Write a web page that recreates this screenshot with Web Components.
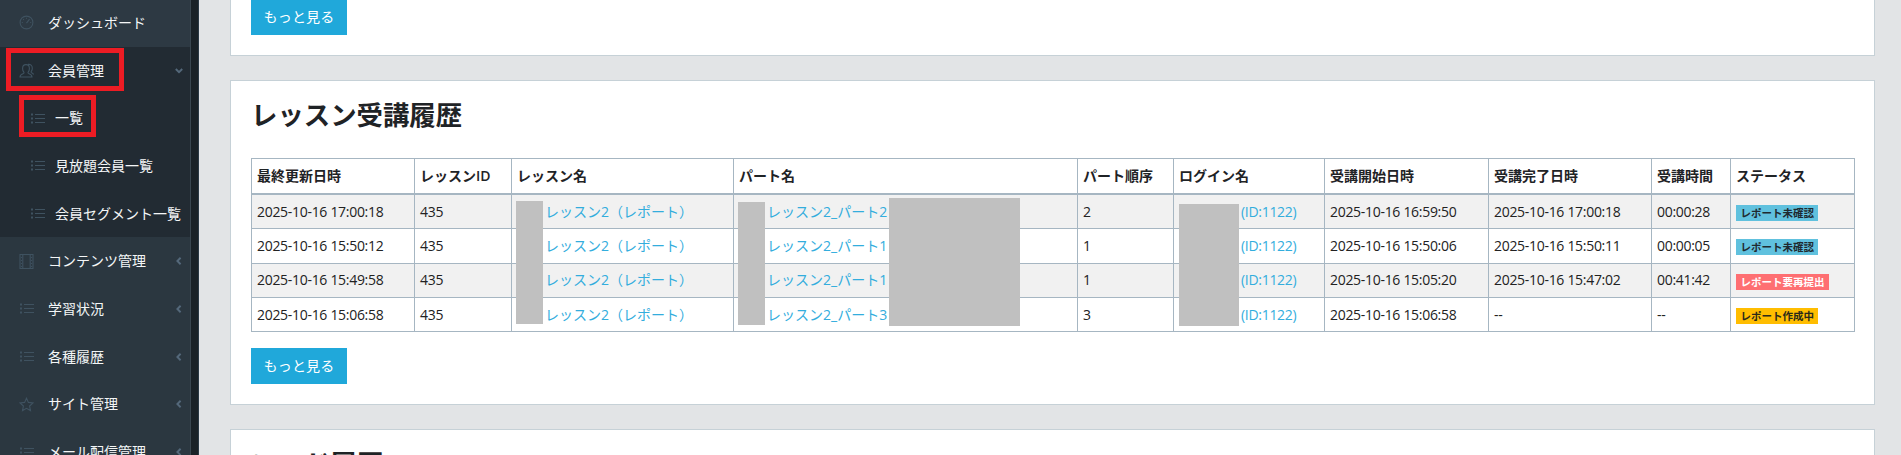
<!DOCTYPE html>
<html lang="ja"><head><meta charset="utf-8"><title>管理画面</title>
<style>
html,body{margin:0;height:455px;overflow:hidden;background:#e2e4e6}
body{font:14px/20px "Open Sans","Noto Sans CJK JP",sans-serif;color:#222}
</style></head><body>
<app-shell>
  <side-nav slot="side">
    <nav-item icon="gauge" tone="light">ダッシュボード</nav-item>
    <nav-group>
      <nav-item icon="user" caret="down" strong>会員管理</nav-item>
      <nav-item icon="list" sub>一覧</nav-item>
      <nav-item icon="list" sub>見放題会員一覧</nav-item>
      <nav-item icon="list" sub>会員セグメント一覧</nav-item>
    </nav-group>
    <nav-item icon="film" caret="left">コンテンツ管理</nav-item>
    <nav-item icon="list" caret="left">学習状況</nav-item>
    <nav-item icon="list" caret="left">各種履歴</nav-item>
    <nav-item icon="star" caret="left">サイト管理</nav-item>
    <nav-item icon="list" caret="left">メール配信管理</nav-item>
  </side-nav>
  <content-card class="first"><more-button></more-button></content-card>
  <content-card heading="レッスン受講履歴"><lesson-table></lesson-table><more-button></more-button></content-card>
  <content-card heading="コード履歴"></content-card>
  <mark-box style="left:6px;top:48px;width:118px;height:43px"></mark-box>
  <mark-box style="left:19px;top:95px;width:77px;height:42px"></mark-box>
</app-shell>
<script>
const ICONS={
 gauge:'<circle cx="7.5" cy="7.5" r="6.4"/><path d="M7.5 8.2 10.6 4.2M2.8 7.5h1M11.2 7.5h1M7.5 2.8v1M4.2 4.2l.7.7"/>',
 user:'<path d="M1 14c0-2.2 1.6-3 3.4-3.6.7-.3.8-1 .3-1.6C4 8 3.6 6.8 3.6 5.4 3.6 3 5 1.6 7 1.6S10.400 3 10.400 5.400c0 1.400-.4 2.600-1.100 3.400-.5.600-.4 1.300.3 1.600C11.400 11 13 11.800 13 14Z"/><path d="M9 1.400c2.500-.4 4.300 1.200 4.300 3.800 0 1.300-.4 2.400-1 3.200-.4.500-.3 1 .3 1.300 1 .4 1.700.9 2.100 1.800"/>',
 list:'<path d="M5 3.500h10M5 7.500h10M5 11.500h10"/><path d="M1 3.500h2M1 7.500h2M1 11.500h2" stroke-width="2"/>',
 film:'<rect x="1" y=".5" width="13" height="14"/><path d="M3.800 .5v14M11.200 .5v14"/><path d="M2.400 3v1M2.400 6v1M2.400 9v1M2.400 12v1M12.600 3v1M12.600 6v1M12.600 9v1M12.600 12v1" stroke-width="1"/>',
 star:'<path d="M7.500 1.200 9.400 5.400l4.600.5-3.400 3.100.9 4.600-4-2.300-4 2.300.9-4.600L1 5.900l4.600-.5Z"/>'
};
const def=(n,c)=>customElements.define(n,c);
const sh=(el,html)=>{el.attachShadow({mode:'open'}).innerHTML=html};

def('app-shell',class extends HTMLElement{constructor(){super();sh(this,`<style>
:host{display:flex;position:relative;height:455px;overflow:hidden}
.side{flex:none;width:199px;display:flex}
.main{flex:1;min-width:0;padding:0 26px 0 31px;display:flex;flex-direction:column;gap:24px;margin-top:-1px}
</style><div class="side"><slot name="side"></slot></div><div class="main"><slot></slot></div>`)}});

def('side-nav',class extends HTMLElement{constructor(){super();sh(this,`<style>
:host{display:block;width:199px;box-sizing:border-box;padding-right:9px;background:linear-gradient(90deg,#2b3740 190px,#3a4750 190px,#3a4750 191px,#1a2227 191px,#1a2227 198px,#2b3a45 198px);height:455px;overflow:hidden}
.w{margin-top:-1px}
</style><div class="w"><slot></slot></div>`)}});

def('nav-group',class extends HTMLElement{constructor(){super();sh(this,`<style>:host{display:block;background:#222b33}</style><slot></slot>`)}});

def('nav-item',class extends HTMLElement{constructor(){super();
 const icon=this.getAttribute('icon'),caret=this.getAttribute('caret'),sub=this.hasAttribute('sub'),light=this.getAttribute('tone')==='light';
 const chev=caret==='down'?'<path d="M1 2.500 5 6.500 9 2.500"/>':caret==='left'?'<path d="M7 1 3 5 7 9"/>':'';
 sh(this,`<style>
 :host{display:flex;align-items:center;height:47.7px;color:#f4f6f7;font:14px/20px "Open Sans","Noto Sans CJK JP",sans-serif;padding-left:${sub?'30px':'19px'};position:relative;box-sizing:border-box;${light?'background:#2d3943;':''}white-space:nowrap}
 .i{width:15px;height:15px;flex:none;fill:none;stroke:#3f5260;stroke-width:1.100;margin-right:${sub?'10px':'14px'}}
 .c{position:absolute;right:7px;top:50%;margin-top:-4px;width:8px;height:8px;fill:none;stroke:#54687a;stroke-width:2.400}
 </style><svg class="i" viewBox="0 0 15 15">${ICONS[icon]}</svg><span><slot></slot></span>${chev?`<svg class="c" viewBox="0 0 10 10">${chev}</svg>`:''}`)}});

def('mark-box',class extends HTMLElement{constructor(){super();sh(this,`<style>:host{position:absolute;box-sizing:border-box;border:5px solid #ed1c24;display:block}</style>`)}});

def('content-card',class extends HTMLElement{constructor(){super();
 const h=this.getAttribute('heading');
 sh(this,`<style>
 :host{display:block;background:#fff;border:1px solid #c6d1d7;padding:0 20px 20px;box-sizing:border-box;flex:none}
 :host(.first){border-top:0}
 h2{margin:0;padding-top:21px;font:600 26.400px/26px "Open Sans","Noto Sans CJK JP",sans-serif;color:#1f2326;height:56px;box-sizing:content-box}
 </style>${h?`<h2>${h}</h2>`:''}<slot></slot>`)}});

def('more-button',class extends HTMLElement{constructor(){super();sh(this,`<style>
 :host{display:block;width:96px;height:36px}
 button{all:unset;display:block;width:96px;height:36px;background:#20a8da;color:#fff;text-align:center;font:14px/36px "Open Sans","Noto Sans CJK JP",sans-serif;letter-spacing:.2px}
 </style><button>もっと見る</button>`)}});

def('status-badge',class extends HTMLElement{constructor(){super();const k=this.getAttribute('kind');
 const map={info:['#60c1de','#1f2a30'],danger:['#fe6f72','#fff'],warn:['#ffbd00','#2a2a1a']};
 sh(this,`<style>:host{display:inline-block;background:${map[k][0]};color:${map[k][1]};font:700 10.500px/16px "Open Sans","Noto Sans CJK JP",sans-serif;padding:0 4.400px;vertical-align:middle;white-space:nowrap}</style><slot></slot>`)}});

def('lesson-table',class extends HTMLElement{constructor(){super();
 const w=[163,97,222,344,96,151,164,163,79,124];
 const heads=['最終更新日時','レッスンID','レッスン名','パート名','パート順序','ログイン名','受講開始日時','受講完了日時','受講時間','ステータス'];
 const rows=[
  ['2025-10-16 17:00:18','レッスン2_パート2','2','2025-10-16 16:59:50','2025-10-16 17:00:18','00:00:28','info','レポート未確認'],
  ['2025-10-16 15:50:12','レッスン2_パート1','1','2025-10-16 15:50:06','2025-10-16 15:50:11','00:00:05','info','レポート未確認'],
  ['2025-10-16 15:49:58','レッスン2_パート1','1','2025-10-16 15:05:20','2025-10-16 15:47:02','00:41:42','danger','レポート要再提出'],
  ['2025-10-16 15:06:58','レッスン2_パート3','3','2025-10-16 15:06:58','--','--','warn','レポート作成中']];
 const redact=[[265,43,27,123],[487,44,27,123],[638,40,131,128],[928,46,60,122]];
 sh(this,`<style>
 :host{display:block;position:relative;margin-bottom:16px;font:14px/20px "Open Sans","Noto Sans CJK JP",sans-serif}
 table{border-collapse:collapse;table-layout:fixed;width:1603px;color:#222}
 th,td{border:1px solid #a6b6c2;padding:0 5px;text-align:left;white-space:nowrap;overflow:hidden}
 th{font-weight:600;height:34px;border-bottom:2.500px solid #a6b6c2;color:#1f2326}
 td{height:33.350px}
 .d,.id{letter-spacing:-.3px}
 tbody tr:nth-child(odd){background:#f1f1f1}
 a{color:#33addd;text-decoration:none}
 td.l{padding-left:33px}
 td.p{padding-left:33px}
 td.n{padding-left:67px}
 .r{position:absolute;background:#c0c0c0}
 </style><table><colgroup>${w.map(x=>`<col style="width:${x}px">`).join('')}</colgroup>
 <thead><tr>${heads.map(h=>`<th>${h}</th>`).join('')}</tr></thead>
 <tbody>${rows.map(r=>`<tr><td class="d">${r[0]}</td><td class="d">435</td><td class="l"><a href="#">レッスン2（レポート）</a></td><td class="p"><a href="#">${r[1]}</a></td><td class="d">${r[2]}</td><td class="n"><a class="id" href="#">(ID:1122)</a></td><td class="d">${r[3]}</td><td class="d">${r[4]}</td><td class="d">${r[5]}</td><td><status-badge kind="${r[6]}">${r[7]}</status-badge></td></tr>`).join('')}</tbody></table>
 ${redact.map(b=>`<div class="r" style="left:${b[0]}px;top:${b[1]}px;width:${b[2]}px;height:${b[3]}px"></div>`).join('')}`)}});
</script>
</body></html>
